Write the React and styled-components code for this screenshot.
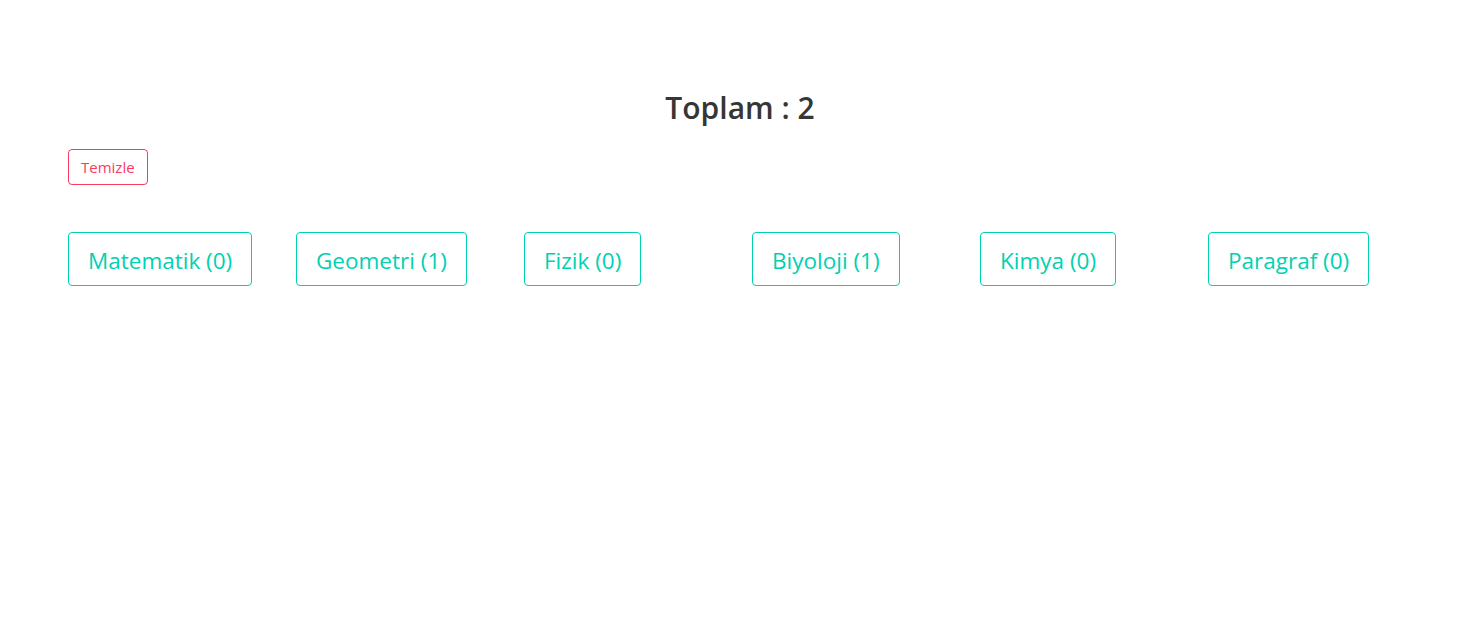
import React from "react";
import styled, { createGlobalStyle } from "styled-components";

const GlobalStyle = createGlobalStyle`
  body {
    margin: 0;
    background: #fff;
    font-family: "Open Sans", "Noto Sans", sans-serif;
    color: #4a4a4a;
  }
`;

const Container = styled.div`
  width: 1368px;
  margin-left: 56px;
  padding-top: 88px;
`;

const Title = styled.h1`
  margin: 0;
  text-align: center;
  font-size: 30px;
  font-weight: 600;
  line-height: 40px;
  color: #363636;
`;

const Toolbar = styled.div`
  padding: 21px 12px 0;
`;

const ClearButton = styled.button`
  height: 36px;
  padding: 0 12px;
  font-family: inherit;
  font-size: 15px;
  color: #ff3860;
  background: #fff;
  border: 1px solid #ff3860;
  border-radius: 4px;
  cursor: pointer;
`;

const Columns = styled.div`
  display: grid;
  grid-template-columns: repeat(6, 228px);
  margin-top: 47px;
`;

const Column = styled.div`
  padding: 0 12px;
`;

const SubjectButton = styled.button`
  height: 54px;
  padding: 2px 19px 0;
  font-family: inherit;
  font-size: 22.5px;
  color: #00d1b2;
  background: #fff;
  border: 1px solid #00d1b2;
  border-radius: 4px;
  cursor: pointer;
`;

const subjects = [
  { name: "Matematik", count: 0 },
  { name: "Geometri", count: 1 },
  { name: "Fizik", count: 0 },
  { name: "Biyoloji", count: 1 },
  { name: "Kimya", count: 0 },
  { name: "Paragraf", count: 0 },
];

const App = () => {
  const total = subjects.reduce((sum, s) => sum + s.count, 0);

  return (
    <>
      <GlobalStyle />
      <Container>
        <Title>Toplam : {total}</Title>
        <Toolbar>
          <ClearButton>Temizle</ClearButton>
        </Toolbar>
        <Columns>
          {subjects.map((s) => (
            <Column key={s.name}>
              <SubjectButton>
                {s.name} ({s.count})
              </SubjectButton>
            </Column>
          ))}
        </Columns>
      </Container>
    </>
  );
};

export default App;
